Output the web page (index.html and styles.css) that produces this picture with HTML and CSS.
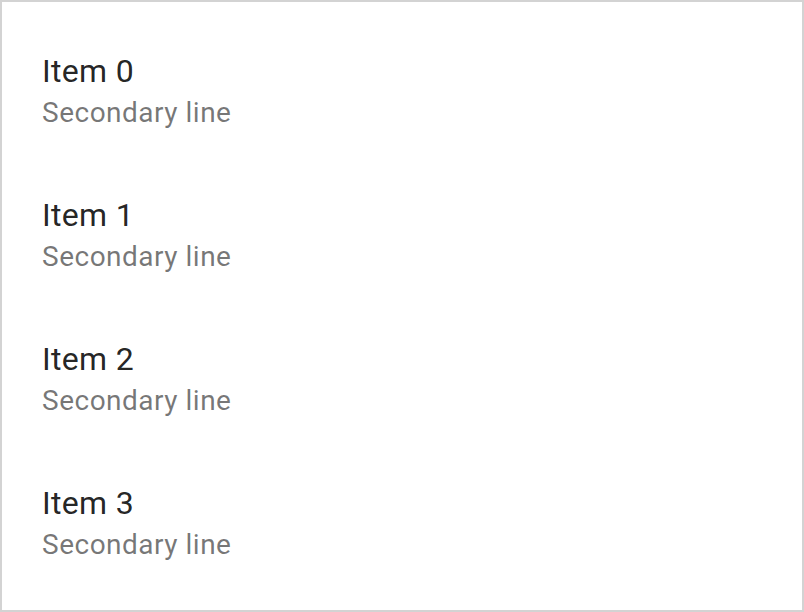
FILE: index.html
```html
<!DOCTYPE html>
<html>
<head>
<meta charset="utf-8">
<link rel="stylesheet" href="styles.css">
</head>
<body>
<ul class="list">
  <li class="item"><span class="primary">Item 0</span><span class="secondary">Secondary line</span></li>
  <li class="item"><span class="primary">Item 1</span><span class="secondary">Secondary line</span></li>
  <li class="item"><span class="primary">Item 2</span><span class="secondary">Secondary line</span></li>
  <li class="item"><span class="primary">Item 3</span><span class="secondary">Secondary line</span></li>
</ul>
</body>
</html>
```
FILE: styles.css
```css
html, body {
  margin: 0;
  padding: 0;
  background: #ffffff;
}
.list {
  box-sizing: border-box;
  width: 804px;
  height: 612px;
  margin: 0;
  padding: 16px 0;
  list-style: none;
  border: 2px solid #d3d3d3;
  font-family: Roboto, "Liberation Sans", sans-serif;
}
.item {
  box-sizing: border-box;
  height: 144px;
  padding-left: 40px;
  padding-top: 4px;
  display: flex;
  flex-direction: column;
  justify-content: center;
}
.primary {
  font-size: 32px;
  line-height: 36px;
  letter-spacing: 0.3px;
  color: rgba(0, 0, 0, 0.87);
}
.secondary {
  margin-top: 6px;
  font-size: 28px;
  line-height: 36px;
  letter-spacing: 0.5px;
  color: rgba(0, 0, 0, 0.54);
}
```
